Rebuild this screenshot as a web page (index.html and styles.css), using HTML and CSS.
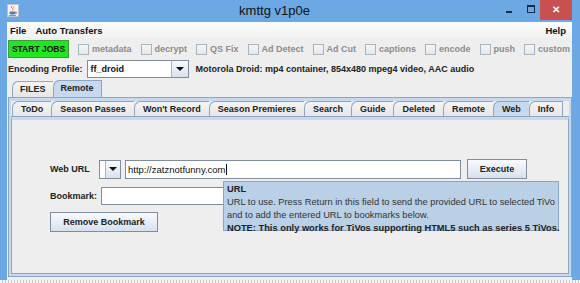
FILE: index.html
```html
<!DOCTYPE html>
<html lang="en">
<head>
    <meta charset="UTF-8">
    <title>kmttg v1p0e</title>
    <link rel="stylesheet" href="styles.css">
</head>
<body>
    <div class="window">
        <!-- Title bar -->
        <div class="titlebar">
            <svg class="app-icon" width="12" height="13" viewBox="0 0 12 13">
                <rect x="0.5" y="0.5" width="11" height="12" fill="#f4f4f4" stroke="#b8c4d0"/>
                <path d="M5 2 Q3.5 3.5 5.5 4.5 Q7 5.5 5.5 6.5" fill="none" stroke="#e07020" stroke-width="1"/>
                <path d="M7 2.5 Q6 3.5 7.2 4.3" fill="none" stroke="#e07020" stroke-width="0.8"/>
                <path d="M2.5 7.5 H8.5 V9 Q8.5 10.5 5.5 10.5 Q2.5 10.5 2.5 9 Z" fill="#4f7fb8"/>
                <path d="M8.5 8 Q10 8 9.8 9 Q9.5 9.8 8.3 9.6" fill="none" stroke="#4f7fb8" stroke-width="0.8"/>
                <path d="M2 11.5 H9" stroke="#4f7fb8" stroke-width="0.8"/>
            </svg>
            <div class="title">kmttg v1p0e</div>
            <div class="win-controls">
                <span class="win-min"></span>
                <span class="win-max"></span>
                <span class="win-close">&#x2715;</span>
            </div>
        </div>

        <div class="client">
            <!-- Menu bar -->
            <div class="menubar">
                <span class="menu-item">File</span>
                <span class="menu-item">Auto Transfers</span>
                <span class="menu-spacer"></span>
                <span class="menu-item">Help</span>
            </div>

            <!-- Job toolbar -->
            <div class="toolbar">
                <button class="start-jobs">START JOBS</button>
                <label class="check"><span class="box"></span>metadata</label>
                <label class="check"><span class="box"></span>decrypt</label>
                <label class="check"><span class="box"></span>QS Fix</label>
                <label class="check"><span class="box"></span>Ad Detect</label>
                <label class="check"><span class="box"></span>Ad Cut</label>
                <label class="check"><span class="box"></span>captions</label>
                <label class="check"><span class="box"></span>encode</label>
                <label class="check"><span class="box"></span>push</label>
                <label class="check"><span class="box"></span>custom</label>
            </div>

            <!-- Encoding profile -->
            <div class="profile-row">
                <span class="label">Encoding Profile:</span>
                <div class="combo profile-combo">
                    <span class="combo-value">ff_droid</span>
                    <span class="combo-arrow"><span class="tri"></span></span>
                </div>
                <span class="label desc">Motorola Droid: mp4 container, 854x480 mpeg4 video, AAC audio</span>
            </div>

            <!-- Outer tabs -->
            <div class="tabs outer-tabs">
                <span class="tab">FILES</span>
                <span class="tab selected">Remote</span>
            </div>
            <div class="outer-panel">
                <div class="outer-inner">
                    <div class="tabs inner-tabs">
                        <span class="tab">ToDo</span>
                        <span class="tab">Season Passes</span>
                        <span class="tab">Won't Record</span>
                        <span class="tab">Season Premieres</span>
                        <span class="tab">Search</span>
                        <span class="tab">Guide</span>
                        <span class="tab">Deleted</span>
                        <span class="tab">Remote</span>
                        <span class="tab selected">Web</span>
                        <span class="tab">Info</span>
                    </div>
                    <div class="inner-panel">
                        <div class="web-form">
                            <div class="form-row">
                                <span class="label url-label">Web URL</span>
                                <div class="combo small-combo">
                                    <span class="combo-value"></span>
                                    <span class="combo-arrow"><span class="tri"></span></span>
                                </div>
                                <div class="field url-field">http://zatznotfunny.com<span class="caret"></span></div>
                                <button class="btn execute">Execute</button>
                            </div>
                            <div class="form-row">
                                <span class="label bm-label">Bookmark:</span>
                                <div class="combo bm-field"></div>
                            </div>
                            <div class="form-row">
                                <button class="btn remove-bm">Remove Bookmark</button>
                            </div>
                        </div>

                        <div class="tooltip">
                            <b>URL</b><br>
                            URL to use. Press Return in this field to send the provided URL to selected TiVo<br>
                            and to add the entered URL to bookmarks below.<br>
                            <b>NOTE: This only works for TiVos supporting HTML5 such as series 5 TiVos.</b>
                        </div>
                    </div>
                </div>
            </div>
        </div>
        <div class="bottom-strip"></div>
    </div>
</body>
</html>
```

FILE: styles.css
```css
:root {
    --frame-color: #6ca8e4;
    --panel-bg: #eeeeee;
    --border-color: #8fa4bf;
    --selected-tab: #c6d9ee;
    --text-disabled: #8c8c8c;
}

body {
    margin: 0;
    font-family: "Liberation Sans", Arial, sans-serif;
    font-size: 9px;
    font-weight: bold;
    color: #222;
    white-space: nowrap;
}

.window {
    width: 580px;
    height: 283px;
    background-color: var(--frame-color);
    display: flex;
    flex-direction: column;
    overflow: hidden;
}

/* title bar */
.titlebar {
    height: 22px;
    display: flex;
    align-items: center;
    flex-shrink: 0;
}

.app-icon {
    margin-left: 7px;
    margin-bottom: 2px;
}

.title {
    flex: 1;
    text-align: center;
    font-size: 13px;
    font-weight: normal;
    color: #111;
    margin-left: 24px;
    margin-bottom: 2px;
}

.win-controls {
    display: flex;
    align-items: flex-start;
    align-self: flex-start;
    height: 20px;
    margin-right: 8px;
}

.win-min {
    width: 6px;
    height: 2px;
    background: #1b2c40;
    margin-top: 11px;
    margin-right: 15px;
}

.win-max {
    width: 6px;
    height: 5px;
    border: 1px solid #1b2c40;
    border-top-width: 2px;
    margin-top: 5px;
    margin-right: 5px;
}

.win-close {
    width: 32px;
    height: 20px;
    background-color: #c8504f;
    color: #fff;
    font-size: 10px;
    line-height: 19px;
    text-align: center;
}

/* client area */
.client {
    flex: 1;
    margin: 0 8px 0 7px;
    background-color: var(--panel-bg);
    display: flex;
    flex-direction: column;
    min-height: 0;
}

.menubar {
    height: 16px;
    display: flex;
    align-items: center;
    background: linear-gradient(#fcfcfc, #f1f1f1);
    flex-shrink: 0;
    font-size: 9.5px;
}

.menu-item {
    padding: 0 3px;
    margin-right: 3px;
    color: #111;
}

.menu-spacer {
    flex: 1;
}

.toolbar {
    height: 22px;
    display: flex;
    align-items: center;
    gap: 9px;
    padding-left: 1px;
    flex-shrink: 0;
}

.start-jobs {
    width: 61px;
    height: 18px;
    padding: 0;
    background-color: #1fe61f;
    border: 1px solid #3f9a3f;
    font: inherit;
    font-size: 8.5px;
    color: #111;
    white-space: nowrap;
}

.check {
    display: flex;
    align-items: center;
    gap: 3px;
    color: var(--text-disabled);
}

.box {
    width: 9px;
    height: 9px;
    border: 1px solid #a9b4c1;
    background: linear-gradient(#f6f6f6, #e4e8ec);
}

.profile-row {
    height: 18px;
    display: flex;
    align-items: center;
    padding-left: 1px;
    flex-shrink: 0;
}

.label {
    color: #222;
}

.combo {
    display: flex;
    height: 18px;
    box-sizing: border-box;
    border: 1px solid #7f8d9c;
    background-color: #fff;
}

.combo-value {
    flex: 1;
    padding-left: 3px;
    line-height: 16px;
    color: #111;
}

.combo-arrow {
    width: 16px;
    border-left: 1px solid #a7b3c0;
    background: linear-gradient(#f7f9fc, #d9e2ec);
    display: flex;
    align-items: center;
    justify-content: center;
}

.tri {
    width: 0;
    height: 0;
    border-left: 4px solid transparent;
    border-right: 4px solid transparent;
    border-top: 4px solid #111;
}

.profile-combo {
    width: 102px;
    margin-left: 4px;
}

.desc {
    margin-left: 7px;
}

/* tabs */
.tabs {
    display: flex;
    align-items: flex-end;
    flex-shrink: 0;
}

.tab {
    height: 16px;
    box-sizing: border-box;
    line-height: 15px;
    padding: 0 8px;
    border: 1px solid var(--border-color);
    border-bottom: none;
    border-right: none;
    border-top-left-radius: 6px 7px;
    background: linear-gradient(#f4f4f4, #e6e6e6);
    color: #222;
}

.tab:last-child {
    border-right: 1px solid var(--border-color);
}

.tab.selected {
    background: var(--selected-tab);
}

.outer-tabs {
    margin-top: 2px;
    padding-left: 5px;
}

.outer-tabs .tab {
    padding: 0 7px;
}

.outer-tabs .tab.selected {
    height: 17px;
}

.outer-panel {
    flex: 1;
    margin: 0 0 3px 1px;
    border: 1px solid var(--border-color);
    background-color: var(--selected-tab);
    padding: 3px 2px 2px 2px;
    display: flex;
    flex-direction: column;
    min-height: 0;
}

.outer-inner {
    flex: 1;
    background-color: var(--panel-bg);
    display: flex;
    flex-direction: column;
    min-height: 0;
}

.inner-tabs {
    padding-left: 1px;
}

.inner-panel {
    flex: 1;
    position: relative;
    border: 1px solid var(--border-color);
    border-top: 3px solid var(--selected-tab);
    background-color: var(--panel-bg);
    min-height: 0;
}

.inner-panel::before {
    content: "";
    position: absolute;
    left: -1px;
    right: -1px;
    top: -4px;
    height: 1px;
    background: var(--border-color);
}

/* web form */
.web-form {
    padding: 39px 0 0 38px;
    display: flex;
    flex-direction: column;
    gap: 8px;
}

.form-row {
    display: flex;
    align-items: center;
}

.url-label {
    width: 49px;
}

.bm-label {
    width: 51px;
}

.small-combo {
    width: 22px;
    height: 19px;
}

.small-combo .combo-value {
    padding: 0;
}

.small-combo .combo-arrow {
    width: 14px;
}

.field {
    height: 19px;
    box-sizing: border-box;
    border: 1px solid #7f8d9c;
    background-color: #fff;
    font-weight: normal;
    font-size: 9.5px;
    line-height: 17px;
    padding-left: 2px;
    color: #111;
}

.url-field {
    width: 336px;
    margin-left: 4px;
}

.caret {
    display: inline-block;
    width: 1px;
    height: 11px;
    background: #111;
    vertical-align: -2px;
}

.bm-field {
    width: 360px;
}

.btn {
    height: 20px;
    padding: 0;
    border: 1px solid #7f8d9c;
    background: linear-gradient(#f8fafd, #d6e1ee);
    font: inherit;
    color: #222;
    white-space: nowrap;
}

.execute {
    width: 60px;
    margin-left: 6px;
}

.remove-bm {
    width: 108px;
    margin-top: -1px;
}

.tooltip {
    position: absolute;
    left: 211px;
    top: 61px;
    width: 336px;
    height: 50px;
    box-sizing: border-box;
    padding: 1px 0 0 3px;
    border: 1px solid #8aa3c4;
    background-color: #b9d0e6;
    font-weight: normal;
    font-size: 9.3px;
    line-height: 13px;
    color: #333;
}

.tooltip b {
    color: #222;
}

.bottom-strip {
    height: 3px;
    flex-shrink: 0;
    background: repeating-linear-gradient(90deg, #f4f4f4 0 2px, #c9c9c9 2px 3px);
}
```
